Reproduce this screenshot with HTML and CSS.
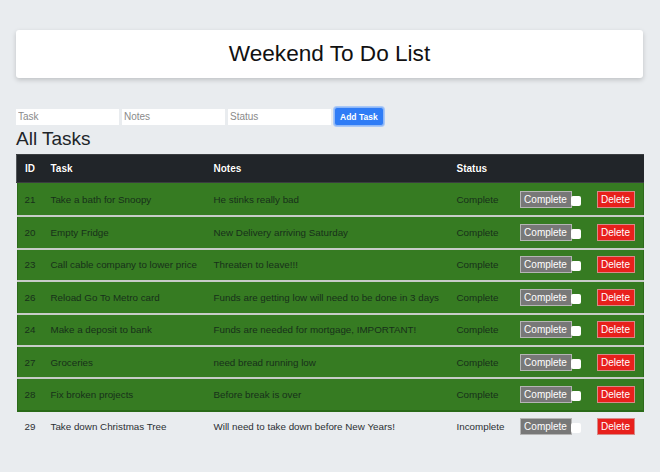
FILE: index.html
```html
<!DOCTYPE html>
<html>
<head>
<meta charset="utf-8">
<link rel="stylesheet" href="styles.css">
</head>
<body>
<div class="page">
  <header class="card"><h1 class="title">Weekend To Do List</h1></header>
  <form class="add-form">
    <input class="field" placeholder="Task">
    <input class="field" placeholder="Notes">
    <input class="field" placeholder="Status">
    <button type="button" class="add-btn">Add Task</button>
  </form>
  <h2 class="section-title">All Tasks</h2>
  <table class="tasks">
    <colgroup><col class="c-id"><col class="c-task"><col class="c-notes"><col class="c-status"><col class="c-complete"><col class="c-delete"></colgroup>
    <thead>
      <tr><th>ID</th><th>Task</th><th>Notes</th><th>Status</th><th></th><th></th></tr>
    </thead>
    <tbody>
      <tr class="done"><td>21</td><td>Take a bath for Snoopy</td><td>He stinks really bad</td><td>Complete</td><td><span class="cmp"><button class="btn-complete">Complete</button><span class="check"></span></span></td><td><button class="btn-delete">Delete</button></td></tr>
      <tr class="done"><td>20</td><td>Empty Fridge</td><td>New Delivery arriving Saturday</td><td>Complete</td><td><span class="cmp"><button class="btn-complete">Complete</button><span class="check"></span></span></td><td><button class="btn-delete">Delete</button></td></tr>
      <tr class="done"><td>23</td><td>Call cable company to lower price</td><td>Threaten to leave!!!</td><td>Complete</td><td><span class="cmp"><button class="btn-complete">Complete</button><span class="check"></span></span></td><td><button class="btn-delete">Delete</button></td></tr>
      <tr class="done"><td>26</td><td>Reload Go To Metro card</td><td>Funds are getting low will need to be done in 3 days</td><td>Complete</td><td><span class="cmp"><button class="btn-complete">Complete</button><span class="check"></span></span></td><td><button class="btn-delete">Delete</button></td></tr>
      <tr class="done"><td>24</td><td>Make a deposit to bank</td><td>Funds are needed for mortgage, IMPORTANT!</td><td>Complete</td><td><span class="cmp"><button class="btn-complete">Complete</button><span class="check"></span></span></td><td><button class="btn-delete">Delete</button></td></tr>
      <tr class="done"><td>27</td><td>Groceries</td><td>need bread running low</td><td>Complete</td><td><span class="cmp"><button class="btn-complete">Complete</button><span class="check"></span></span></td><td><button class="btn-delete">Delete</button></td></tr>
      <tr class="done"><td>28</td><td>Fix broken projects</td><td>Before break is over</td><td>Complete</td><td><span class="cmp"><button class="btn-complete">Complete</button><span class="check"></span></span></td><td><button class="btn-delete">Delete</button></td></tr>
      <tr class="open"><td>29</td><td>Take down Christmas Tree</td><td>Will need to take down before New Years!</td><td>Incomplete</td><td><span class="cmp"><button class="btn-complete">Complete</button><span class="check"></span></span></td><td><button class="btn-delete">Delete</button></td></tr>
    </tbody>
  </table>
</div>
</body>
</html>
```

FILE: styles.css
```css
html, body {
  margin: 0;
  padding: 0;
  background: #e9ecef;
  font-family: "Liberation Sans", Arial, sans-serif;
  color: #212529;
}
.page {
  padding: 30px 17px 0 16px;
}
.card {
  background: #fff;
  border-radius: 3px;
  box-shadow: 0 2px 5px rgba(0,0,0,0.18);
  height: 48px;
  display: flex;
  align-items: center;
  justify-content: center;
}
.title {
  margin: 0;
  font-weight: 400;
  font-size: 22.6px;
  color: #111;
}
.add-form {
  display: flex;
  align-items: center;
  gap: 3px;
  margin-top: 29px;
}
.field {
  width: 103px;
  height: 16px;
  box-sizing: border-box;
  border: none;
  padding: 0 2px;
  font-family: inherit;
  font-size: 10px;
  background: #fff;
}
.field::placeholder { color: #8a8a8a; }
.add-btn {
  height: 19px;
  padding: 0 5px;
  border: 1px solid #8fb8f8;
  border-radius: 3px;
  background: #2f7cf6;
  box-shadow: 0 0 0 1px #a9c8f7;
  color: #fff;
  font-family: inherit;
  font-size: 8.5px;
  font-weight: 700;
  margin-left: 0;
}
.section-title {
  margin: 2px 0 4px;
  font-weight: 400;
  font-size: 19px;
  line-height: 22px;
}
.tasks {
  width: 627px;
  table-layout: fixed;
  border-collapse: collapse;
  font-size: 9.8px;
}
.c-id { width: 26px; }
.c-task { width: 163px; }
.c-notes { width: 243px; }
.c-status { width: 64px; }
.c-complete { width: 77px; }
.c-delete { width: 54px; }
.tasks th {
  background: #212529;
  color: #fff;
  font-weight: 700;
  font-size: 10px;
  text-align: left;
  height: 27px;
  padding: 0 0 0 8px;
  border: 1px solid #3a3d40;
  border-left: none;
  border-right: none;
  text-shadow: 0 0 1px #000;
}
.tasks th:first-child { border-left: 1px solid #52565a; }
.tasks td {
  padding: 0 0 0 8px;
  height: 30.4px;
  white-space: nowrap;
  overflow: visible;
  color: #1e2a1c;
}
.tasks tr.done td {
  background: #367b22;
  border-top: 2px solid #c8ccc8;
  color: #17301a;
}
.tasks tr.done td:first-child { box-shadow: inset 1px 0 0 #2c6a1a; }
.tasks tr.done td:last-child { box-shadow: inset -1px 0 0 #2c6a1a; }
.tasks tbody tr.done:first-child td { border-top: none; height: 32.4px; }
.tasks tr.done:nth-child(7) td { border-bottom: 2px solid #2a6a18; }
.tasks tr.open td { color: #2b2f33; }
.cmp {
  display: inline-flex;
  align-items: center;
}
.btn-complete {
  height: 17px;
  width: 52px;
  padding: 0;
  margin-left: -1px;
  background: #787878;
  border: 1px solid #b5b5b5;
  color: #fff;
  font-family: inherit;
  font-size: 10px;
}
.check {
  display: inline-block;
  width: 10px;
  height: 10px;
  border-radius: 2px;
  background: #fff;
  margin-left: -1px;
  margin-top: 3px;
}
.btn-delete {
  height: 17px;
  width: 38px;
  padding: 0;
  margin-left: -1px;
  background: #e8201c;
  border: 1px solid #d68a88;
  color: #fff;
  font-family: inherit;
  font-size: 10px;
}
```
